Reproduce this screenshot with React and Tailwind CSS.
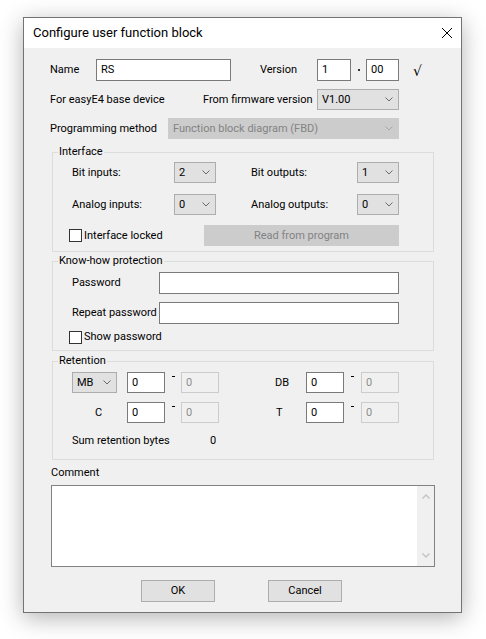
import React from 'react';

// small combo-box arrow
function Chevron({ disabled }) {
  return (
    <svg width="8" height="5" viewBox="0 0 8 5" fill="none">
      <path d="M0.5 0.5L4 4L7.5 0.5" stroke={disabled ? '#a8a8a8' : '#6a6a6a'} strokeWidth="1" />
    </svg>
  );
}

function Select({ value, w, disabled }) {
  return (
    <div
      className={`${w} h-[21px] flex items-center justify-between pl-[4px] pr-[5px] border ${
        disabled ? 'bg-[#cccccc] border-[#cccccc] text-[#838383]' : 'bg-[#e1e1e1] border-[#adadad] text-black'
      }`}
    >
      <span className="pt-[1px]">{value}</span>
      <Chevron disabled={disabled} />
    </div>
  );
}

function TextBox({ value = '', w, h = 'h-[22px]', disabled }) {
  return (
    <div
      className={`${w} ${h} flex items-center pl-[4px] border ${
        disabled ? 'border-[#cccccc] text-[#8d8d8d]' : 'bg-white border-[#7a7a7a]'
      }`}
    >
      {value}
    </div>
  );
}

function CheckBox({ label, w = '' }) {
  return (
    <div className={`flex items-center h-[16px] ${w}`}>
      <span className="w-[13px] h-[13px] border border-[#333333] bg-white" />
      <span className="ml-[2px]">{label}</span>
    </div>
  );
}

function GroupBox({ title, className = '', children }) {
  return (
    <div className={`relative ml-[28px] w-[382px] border border-[#dcdcdc] ${className}`}>
      <span className="absolute left-[5px] top-[-8px] px-[1px] bg-[#f0f0f0] leading-[14px]">{title}</span>
      {children}
    </div>
  );
}

function Dash({ w }) {
  return (
    <div className={`${w} h-[21px] flex justify-center`}>
      <span className="mt-[4px] w-[3px] h-[1px] bg-black" />
    </div>
  );
}

function RangeRow({ first, secondLabel, className = '' }) {
  return (
    <div className={`h-[21px] pl-[19px] flex items-center ${className}`}>
      {first}
      <TextBox value="0" w="w-[38px]" h="h-[21px]" />
      <Dash w="w-[16px]" />
      <TextBox value="0" w="w-[38px]" h="h-[21px]" disabled />
      {secondLabel}
      <TextBox value="0" w="w-[38px]" h="h-[21px]" />
      <Dash w="w-[17px]" />
      <TextBox value="0" w="w-[38px]" h="h-[21px]" disabled />
    </div>
  );
}

export default function App() {
  return (
    <div className="w-[486px] h-[639px] bg-white pt-[17px] pl-[23px] font-['Roboto',sans-serif] text-[11px] text-black leading-[14px]">
      <div className="w-[439px] h-[596px] border border-[#737373] bg-[#f0f0f0] shadow-[0_5px_22px_rgba(0,0,0,0.3)] flex flex-col">
        {/* title bar */}
        <div className="h-[30px] bg-white flex items-center justify-between pl-[9px] pr-[9px]">
          <span className="text-[13px]">Configure user function block</span>
          <svg width="10" height="10" viewBox="0 0 10 10">
            <path d="M0 0L10 10M10 0L0 10" stroke="#000" strokeWidth="1" />
          </svg>
        </div>

        <div className="flex flex-col">
          <div className="mt-[11px] h-[22px] ml-[26px] flex items-center">
            <span className="w-[46px]">Name</span>
            <TextBox value="RS" w="w-[135px]" />
            <span className="ml-[29px] w-[57px]">Version</span>
            <TextBox value="1" w="w-[34px]" />
            <div className="w-[15px] flex justify-center">
              <span className="w-[2px] h-[2px] bg-[#333333]" />
            </div>
            <TextBox value="00" w="w-[33px]" />
            <span className="ml-[14px] pt-[2px] font-['DejaVu_Sans',sans-serif] text-[14px]">√</span>
          </div>

          <div className="mt-[8px] h-[21px] ml-[26px] flex items-center">
            <span className="w-[153px]">For easyE4 base device</span>
            <span className="w-[114px]">From firmware version</span>
            <Select value="V1.00" w="w-[82px]" />
          </div>

          <div className="mt-[8px] h-[21px] ml-[26px] flex items-center">
            <span className="w-[118px]">Programming method</span>
            <Select value="Function block diagram (FBD)" w="w-[231px]" disabled />
          </div>

          <GroupBox title="Interface" className="mt-[13px] h-[100px]">
            <div className="mt-[9px] h-[21px] pl-[19px] flex items-center">
              <span className="w-[102px]">Bit inputs:</span>
              <Select value="2" w="w-[42px]" />
              <span className="ml-[35px] w-[106px]">Bit outputs:</span>
              <Select value="1" w="w-[42px]" />
            </div>
            <div className="mt-[11px] h-[21px] pl-[19px] flex items-center">
              <span className="w-[102px]">Analog inputs:</span>
              <Select value="0" w="w-[42px]" />
              <span className="ml-[35px] w-[106px]">Analog outputs:</span>
              <Select value="0" w="w-[42px]" />
            </div>
            <div className="mt-[10px] h-[21px] pl-[16px] flex items-center">
              <CheckBox label="Interface locked" w="w-[135px]" />
              <div className="w-[195px] h-[21px] bg-[#cccccc] text-[#838383] flex items-center justify-center">
                Read from program
              </div>
            </div>
          </GroupBox>

          <GroupBox title="Know-how protection" className="mt-[9px] h-[90px]">
            <div className="mt-[10px] h-[22px] pl-[19px] flex items-center">
              <span className="w-[87px]">Password</span>
              <TextBox w="w-[240px]" />
            </div>
            <div className="mt-[8px] h-[22px] pl-[19px] flex items-center">
              <span className="w-[87px]">Repeat password</span>
              <TextBox w="w-[240px]" />
            </div>
            <div className="mt-[5px] pl-[16px]">
              <CheckBox label="Show password" />
            </div>
          </GroupBox>

          <GroupBox title="Retention" className="mt-[10px] h-[99px]">
            <RangeRow
              className="mt-[10px]"
              first={
                <div className="mr-[10px]">
                  <Select value="MB" w="w-[45px]" />
                </div>
              }
              secondLabel={<span className="ml-[56px] w-[31px]">DB</span>}
            />
            <RangeRow
              className="mt-[9px]"
              first={<span className="w-[55px] pl-[23px]">C</span>}
              secondLabel={<span className="ml-[56px] w-[31px] pl-[1px]">T</span>}
            />
            <div className="mt-[10px] h-[16px] pl-[19px] flex items-center">
              <span className="w-[138px]">Sum retention bytes</span>
              <span>0</span>
            </div>
          </GroupBox>

          <div className="mt-[6px] ml-[27px] h-[14px] flex items-center">Comment</div>
          <div className="mt-[5px] ml-[27px] w-[384px] h-[82px] border border-[#828282] bg-white flex justify-end">
            <div className="w-[17px] h-full bg-[#f0f0f0] flex flex-col items-center justify-between py-[8px]">
              <svg width="8" height="5" viewBox="0 0 8 5" fill="none">
                <path d="M0.5 4.5L4 1L7.5 4.5" stroke="#c2c2c2" strokeWidth="1.4" />
              </svg>
              <svg width="8" height="5" viewBox="0 0 8 5" fill="none">
                <path d="M0.5 0.5L4 4L7.5 0.5" stroke="#c2c2c2" strokeWidth="1.4" />
              </svg>
            </div>
          </div>

          <div className="mt-[13px] ml-[117px] flex">
            <div className="w-[74px] h-[22px] bg-[#e1e1e1] border border-[#adadad] flex items-center justify-center">OK</div>
            <div className="ml-[53px] w-[74px] h-[22px] bg-[#e1e1e1] border border-[#adadad] flex items-center justify-center">
              Cancel
            </div>
          </div>
        </div>
      </div>
    </div>
  );
}
